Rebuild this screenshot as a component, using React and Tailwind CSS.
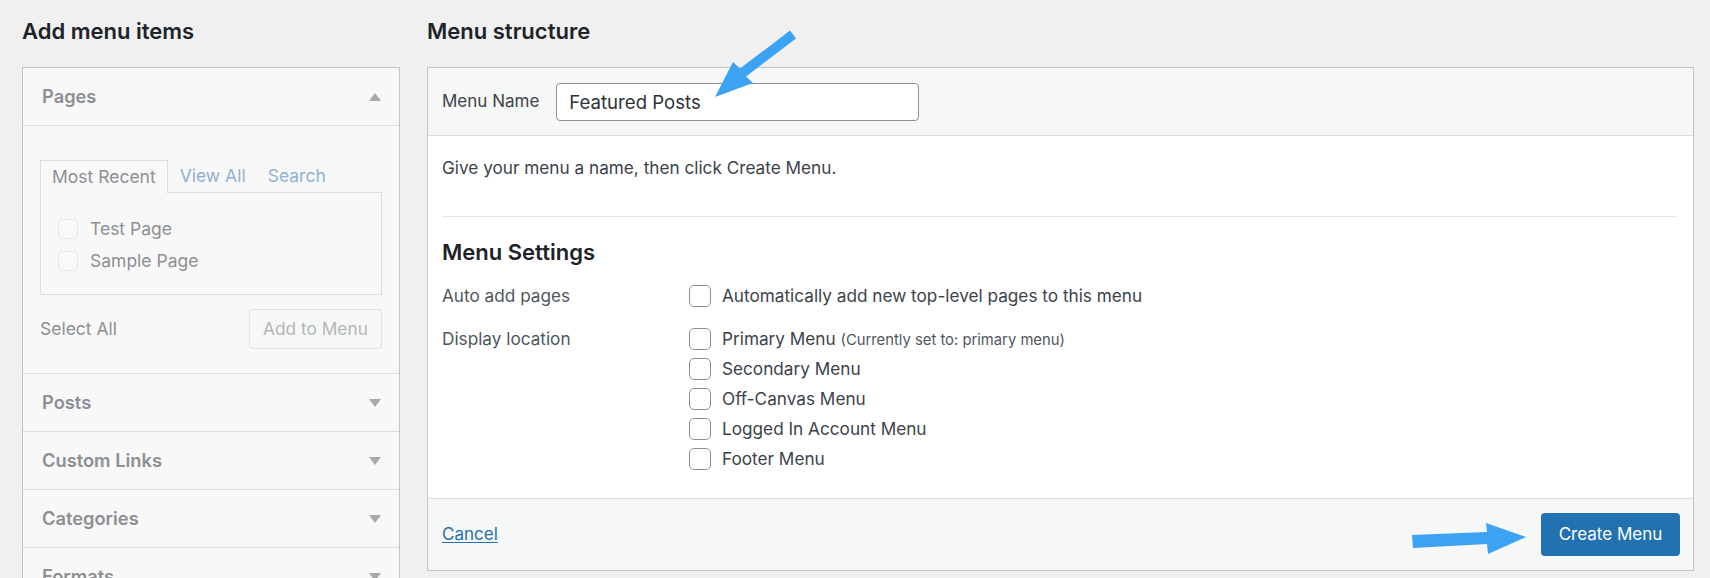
import React from 'react';

const font = { fontFamily: 'Inter, "Noto Sans", sans-serif' };

function Caret({ up }) {
  return (
    <svg width="12" height="8" viewBox="0 0 12 8" className="shrink-0">
      <polygon points={up ? '6,0 12,8 0,8' : '0,0 12,0 6,8'} fill="#a7aaad" />
    </svg>
  );
}

function Checkbox({ faded }) {
  return (
    <span
      className={
        faded
          ? 'w-[20px] h-[20px] rounded-[4px] border border-[#e6e6e8] bg-[#f9f9f9] shrink-0'
          : 'w-[22px] h-[22px] rounded-[5px] border-[1.5px] border-[#8c8f94] bg-white shrink-0'
      }
    />
  );
}

// collapsed accordion row in the left column
function Section({ title }) {
  return (
    <div className="h-[58px] border-b border-[#dcdcde] flex items-center justify-between pl-[19px] pr-[18px]">
      <span className="text-[18.3px] font-semibold text-[#8c8f94]">{title}</span>
      <Caret />
    </div>
  );
}

const locations = ['Secondary Menu', 'Off-Canvas Menu', 'Logged In Account Menu', 'Footer Menu'];

export default function App() {
  return (
    <div className="relative h-[578px] overflow-hidden bg-[#f0f0f1] text-[#1d2327]" style={font}>
      <div className="flex pl-[22px] pr-[16px] gap-[27px]">
        {/* Add menu items */}
        <div className="w-[378px] shrink-0">
          <h2 className="h-[67px] pt-[17px] text-[22px] leading-[28px] font-semibold">Add menu items</h2>
          <div className="border border-b-0 border-[#c3c4c7] bg-[#f8f8f8]">
            <div className="h-[58px] border-b border-[#dcdcde] flex items-center justify-between pl-[19px] pr-[18px]">
              <span className="text-[18.3px] font-semibold text-[#8c8f94]">Pages</span>
              <Caret up />
            </div>

            <div className="h-[248px] border-b border-[#dcdcde] pt-[34px] px-[17px]">
              <div className="flex items-end h-[33px] text-[17.5px] relative z-10">
                <div className="h-[33px] px-[11px] flex items-center border border-b-0 border-[#dcdcde] bg-[#f8f8f8] text-[#8c8f94]">
                  Most Recent
                </div>
                <a className="h-[33px] pl-[12px] pr-[11px] flex items-center text-[#8fb1d3]">View All</a>
                <a className="h-[33px] px-[11px] flex items-center text-[#8fb1d3]">Search</a>
              </div>
              <div className="h-[103px] -mt-px border border-[#dcdcde] bg-[#f8f8f8] pt-[26px] px-[17px] flex flex-col gap-[12px]">
                {['Test Page', 'Sample Page'].map((p) => (
                  <label key={p} className="flex items-center gap-[12px] h-[20px] text-[17.5px] text-[#8c8f94]">
                    <Checkbox faded />
                    {p}
                  </label>
                ))}
              </div>
              <div className="flex items-center justify-between mt-[14px]">
                <span className="text-[17.5px] text-[#8c8f94]">Select All</span>
                <button className="h-[40px] w-[133px] rounded-[4px] border border-[#e2e2e4] bg-[#f6f7f7] text-[17.3px] text-[#b4b6b9]">
                  Add to Menu
                </button>
              </div>
            </div>

            <Section title="Posts" />
            <Section title="Custom Links" />
            <Section title="Categories" />
            <Section title="Formats" />
          </div>
        </div>

        {/* Menu structure */}
        <div className="flex-1">
          <h2 className="h-[67px] pt-[17px] text-[22px] leading-[28px] font-semibold">Menu structure</h2>
          <div className="border border-[#c3c4c7] bg-white">
            <div className="h-[68px] bg-[#f6f7f7] border-b border-[#dcdcde] flex items-center pl-[14px] gap-[17px]">
              <span className="text-[17px] text-[#3c434a]">Menu Name</span>
              <input
                readOnly
                value="Featured Posts"
                className="w-[363px] h-[38px] rounded-[4px] border border-[#8c8f94] bg-white px-[12px] text-[18.6px] text-[#2c3338] outline-none"
                style={font}
              />
            </div>

            <div className="pt-[22px] pl-[14px] pr-[16px] pb-[27px]">
              <p className="text-[17.2px] leading-[20px] text-[#3c434a]">Give your menu a name, then click Create Menu.</p>
              <div className="mt-[38px] h-px bg-[#e6e6e8]" />
              <h3 className="mt-[21px] text-[22px] leading-[28px] font-semibold">Menu Settings</h3>

              <div className="grid grid-cols-[247px_1fr] mt-[18px] text-[17.2px] text-[#3c434a]">
                <span className="h-[24px] leading-[24px] text-[#50575e]">Auto add pages</span>
                <label className="h-[24px] flex items-center gap-[11px]">
                  <Checkbox />
                  Automatically add new top-level pages to this menu
                </label>
              </div>

              <div className="grid grid-cols-[247px_1fr] mt-[19px] text-[17.2px] text-[#3c434a]">
                <span className="h-[24px] leading-[24px] text-[#50575e]">Display location</span>
                <div className="flex flex-col gap-[6px]">
                  <label className="h-[24px] flex items-center gap-[11px]">
                    <Checkbox />
                    <span>
                      Primary Menu{' '}
                      <span className="text-[14.8px] text-[#50575e]">(Currently set to: primary menu)</span>
                    </span>
                  </label>
                  {locations.map((l) => (
                    <label key={l} className="h-[24px] flex items-center gap-[11px]">
                      <Checkbox />
                      {l}
                    </label>
                  ))}
                </div>
              </div>
            </div>

            <div className="h-[72px] bg-[#f6f7f7] border-t border-[#dcdcde] flex items-center justify-between pl-[14px] pr-[13px]">
              <a className="text-[17px] text-[#2271b1] underline underline-offset-2">Cancel</a>
              <button className="h-[43px] w-[139px] rounded-[4px] bg-[#2271b1] text-white text-[17px]">Create Menu</button>
            </div>
          </div>
        </div>
      </div>

      {/* callout arrows */}
      <svg className="absolute inset-0 pointer-events-none" width="1710" height="578">
        <polygon
          points="790,30.6 796,38.4 746,76.4 753,83 715,97 733,62 740,68.6"
          fill="#3ba2f4"
        />
        <polygon
          points="1412,535 1487,532 1486,523 1526,537 1488,554 1487,544 1413,548"
          fill="#3ba2f4"
        />
      </svg>
    </div>
  );
}
